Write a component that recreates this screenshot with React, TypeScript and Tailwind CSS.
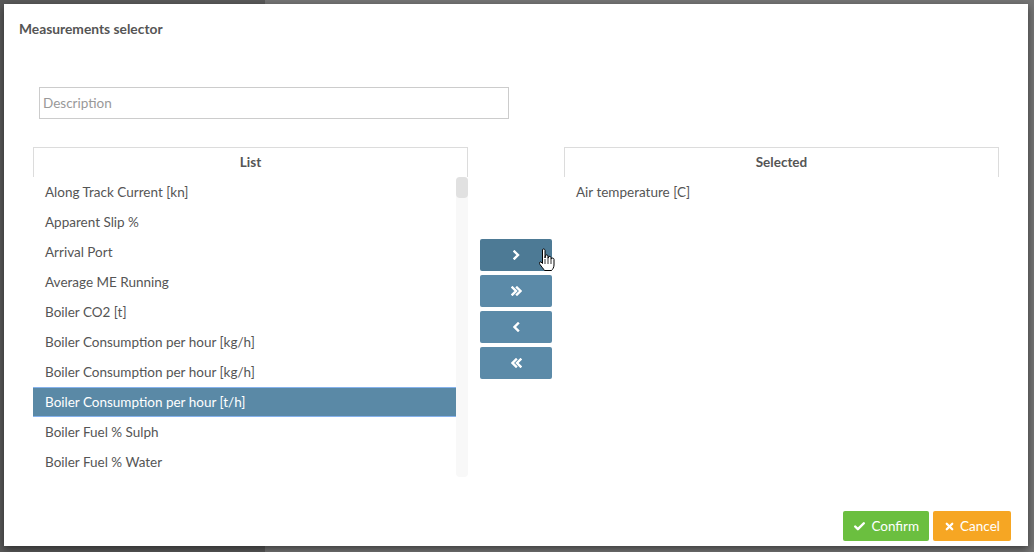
import { Check, X } from "lucide-react";

const items = [
  "Along Track Current [kn]",
  "Apparent Slip %",
  "Arrival Port",
  "Average ME Running",
  "Boiler CO2 [t]",
  "Boiler Consumption per hour [kg/h]",
  "Boiler Consumption per hour [kg/h]",
  "Boiler Consumption per hour [t/h]",
  "Boiler Fuel % Sulph",
  "Boiler Fuel % Water",
];

const selectedIndex = 7;

function Chevron({ dir, double }: { dir: "left" | "right"; double?: boolean }) {
  const single = dir === "right" ? "M1.5 1.5 L5 5 L1.5 8.5" : "M5 1.5 L1.5 5 L5 8.5";
  return (
    <svg width={double ? 11 : 7} height="10" viewBox={double ? "0 0 11 10" : "0 0 7 10"} fill="none" stroke="white" strokeWidth="2.4" strokeLinecap="square">
      <path d={single} />
      {double && <path d={single} transform="translate(4.5 0)" />}
    </svg>
  );
}

function HandCursor() {
  return (
    <svg width="18" height="24" viewBox="0 0 18 24" className="absolute left-[58px] top-[9px]">
      <path
        d="M4.5 1.5 C5.5 0.5 7 1 7 2.5 L7 10 L7.5 7.5 C8.3 6.5 9.7 6.8 10 8 L10 10.5 L10.5 9 C11.3 8 12.7 8.3 13 9.5 L13 11.5 L13.5 10.5 C14.3 9.7 15.8 10 16 11.3 L16 17 C16 19.5 14.5 21.5 13.5 22.5 L6.5 22.5 C5.5 21 3.5 18.5 2 16.5 C1 15 1.5 13.5 3 14 L4.5 15.5 Z"
        fill="white"
        stroke="black"
        strokeWidth="1"
        strokeLinejoin="round"
      />
      <path d="M7 11 L7 16 M10 11 L10 16 M13 12 L13 16" stroke="black" strokeWidth="0.8" />
    </svg>
  );
}

function PanelHeader({ title }: { title: string }) {
  return (
    <div className="h-[30px] border-t border-l border-r border-[#dcdcdc] flex items-center justify-center text-[13.5px] font-bold text-[#555]">
      {title}
    </div>
  );
}

export default function App() {
  return (
    <div
      className="w-[1034px] h-[552px] bg-[linear-gradient(90deg,#5a5a5a_0px,#5a5a5a_265px,#757575_265px)] p-[4px] overflow-hidden"
      style={{ fontFamily: "Lato, 'Open Sans', sans-serif" }}
    >
      <div className="w-[1024px] h-[542px] bg-white flex flex-col shadow-[0_3px_8px_rgba(0,0,0,0.5)]">
        <div className="h-[50px] flex items-center pt-[1px] pl-[15px] text-[13.8px] font-bold text-[#555]">
          Measurements selector
        </div>

        <div className="px-[29px]">
          <div className="mt-[33px] ml-[6px] w-[470px] h-[32px] border border-[#ccc] flex items-center pl-[3px] text-[13.5px] text-[#999]">
            Description
          </div>

          <div className="mt-[28px] flex">
            <div className="w-[435px]">
              <PanelHeader title="List" />
              <div className="flex h-[300px]">
                <div className="flex-1">
                  {items.map((it, i) =>
                    i === selectedIndex ? (
                      <div
                        key={i}
                        className="h-[30px] flex items-center pl-[12px] pt-[1px] text-[13.5px] text-white bg-[#5a89a6] border-t border-b border-[#86b2ec]"
                      >
                        {it}
                      </div>
                    ) : (
                      <div key={i} className="h-[30px] flex items-center pl-[12px] pt-[1px] text-[13.5px] text-[#555]">
                        {it}
                      </div>
                    )
                  )}
                </div>
                <div className="w-[12px] bg-[#f8f8f8] rounded-[4px]">
                  <div className="h-[21px] bg-[#e1e1e1] rounded-[4px]" />
                </div>
              </div>
            </div>

            <div className="w-[96px] flex flex-col items-center gap-[4px] pt-[92px]">
              <div className="relative">
                <div className="w-[72px] h-[32px] rounded-[2px] bg-[#4d7a95] flex items-center justify-center">
                  <Chevron dir="right" />
                </div>
                <HandCursor />
              </div>
              <div className="w-[72px] h-[32px] rounded-[2px] bg-[#5b8aa8] flex items-center justify-center">
                <Chevron dir="right" double />
              </div>
              <div className="w-[72px] h-[32px] rounded-[2px] bg-[#5b8aa8] flex items-center justify-center">
                <Chevron dir="left" />
              </div>
              <div className="w-[72px] h-[32px] rounded-[2px] bg-[#5b8aa8] flex items-center justify-center">
                <Chevron dir="left" double />
              </div>
            </div>

            <div className="w-[435px]">
              <PanelHeader title="Selected" />
              <div className="h-[30px] flex items-center pl-[12px] pt-[1px] text-[13.5px] text-[#555]">
                Air temperature [C]
              </div>
            </div>
          </div>
        </div>

        <div className="flex-1" />

        <div className="flex justify-end gap-[4px] pr-[17px] pb-[5px]">
          <div className="h-[30px] px-[10px] rounded-[2px] bg-[#6bbf3f] flex items-center gap-[5px] text-[13.5px] text-white">
            <Check size={13} strokeWidth={4.5} />
            Confirm
          </div>
          <div className="h-[30px] px-[11px] rounded-[2px] bg-[#f6a623] flex items-center gap-[5px] text-[13.5px] text-white">
            <X size={11} strokeWidth={5} />
            Cancel
          </div>
        </div>
      </div>
    </div>
  );
}
